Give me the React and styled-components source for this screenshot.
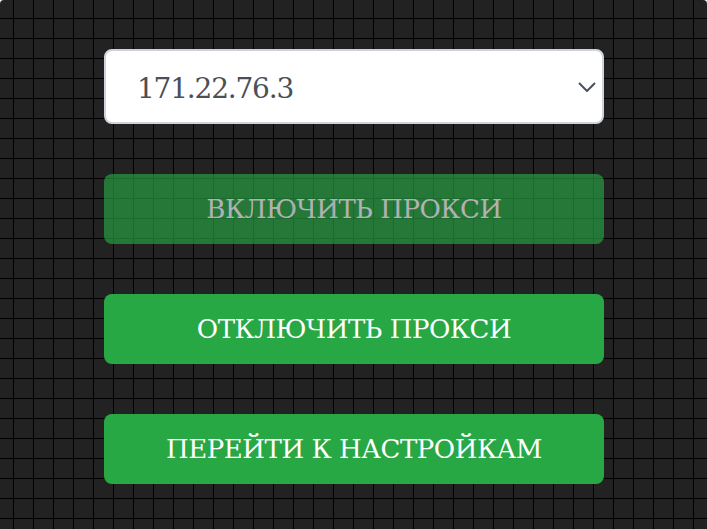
import React from 'react';
import styled, { createGlobalStyle } from 'styled-components';

const GlobalStyle = createGlobalStyle`
  html, body {
    margin: 0;
    padding: 0;
    height: 100%;
    background: #fff;
  }
  #root {
    height: 100%;
  }
`;

const Page = styled.div`
  box-sizing: border-box;
  height: 529px;
  overflow: hidden;
  padding: 49px 103px 0 104px;
  border-radius: 4px 4px 0 0;
  background-color: #222;
  background-image:
    linear-gradient(to right, #000 1px, transparent 1px),
    linear-gradient(to bottom, #000 1px, transparent 1px);
  background-size: 20px 20px;
  background-position: 13px 18px;
  font-family: 'DejaVu Serif', 'Liberation Serif', serif;
`;

const Stack = styled.div`
  display: flex;
  flex-direction: column;
  gap: 50px;
`;

const SelectBox = styled.div`
  box-sizing: border-box;
  height: 75px;
  display: flex;
  align-items: center;
  justify-content: space-between;
  padding: 0 6px 0 31px;
  background: #fff;
  border: 2px solid #ced4da;
  border-radius: 8px;
  color: #495057;
  font-size: 28px;
  letter-spacing: -1.2px;
`;

const SelectValue = styled.span`
  padding-top: 3px;
`;

const Button = styled.button`
  height: 70px;
  padding: 0;
  border: 0;
  border-radius: 8px;
  background: #28a745;
  color: #fff;
  font-family: inherit;
  font-size: 26px;
  letter-spacing: -0.45px;
  opacity: ${p => (p.disabled ? 0.65 : 1)};
`;

const Chevron = () => (
  <svg width="18" height="10" viewBox="0 0 18 10" fill="none" stroke="#495057" strokeWidth="2">
    <path d="M1 1l8 8 8-8" />
  </svg>
);

const App = () => (
  <>
    <GlobalStyle />
    <Page>
      <Stack>
        <SelectBox>
          <SelectValue>171.22.76.3</SelectValue>
          <Chevron />
        </SelectBox>
        <Button disabled>ВКЛЮЧИТЬ ПРОКСИ</Button>
        <Button>ОТКЛЮЧИТЬ ПРОКСИ</Button>
        <Button>ПЕРЕЙТИ К НАСТРОЙКАМ</Button>
      </Stack>
    </Page>
  </>
);

export default App;
